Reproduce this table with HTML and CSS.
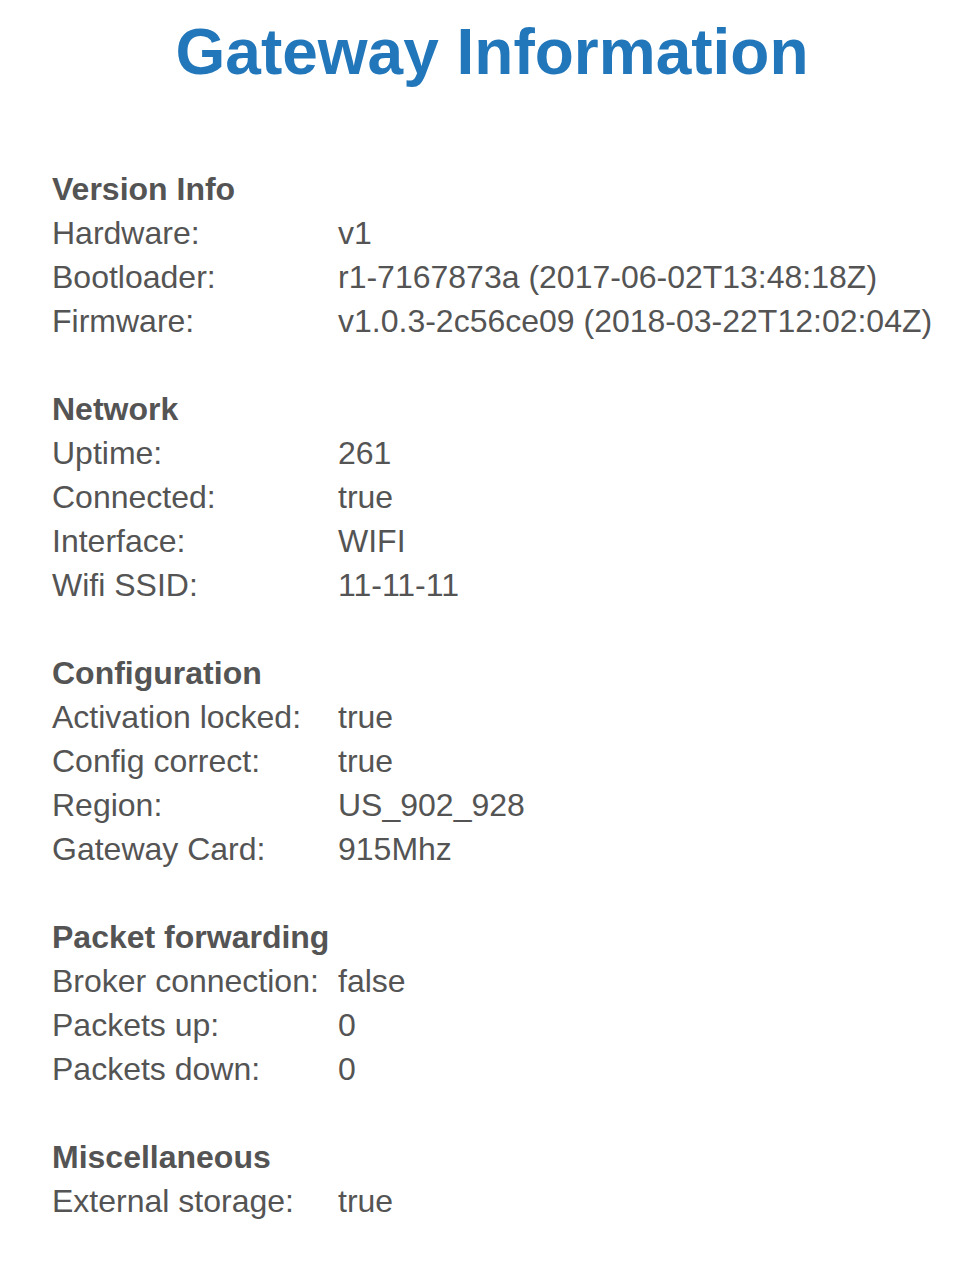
FILE: index.html
```html
<!DOCTYPE html>
<html>
<head>
<meta charset="utf-8">
<link rel="stylesheet" href="styles.css">
<title>Gateway Information</title>
</head>
<body>
<div class="page">
  <h1 class="title">Gateway Information</h1>

  <section class="group">
    <h2 class="group-title">Version Info</h2>
    <div class="label">Hardware:</div><div class="value">v1</div>
    <div class="label">Bootloader:</div><div class="value">r1-7167873a (2017-06-02T13:48:18Z)</div>
    <div class="label">Firmware:</div><div class="value">v1.0.3-2c56ce09 (2018-03-22T12:02:04Z)</div>
  </section>

  <section class="group">
    <h2 class="group-title">Network</h2>
    <div class="label">Uptime:</div><div class="value">261</div>
    <div class="label">Connected:</div><div class="value">true</div>
    <div class="label">Interface:</div><div class="value">WIFI</div>
    <div class="label">Wifi SSID:</div><div class="value">11-11-11</div>
  </section>

  <section class="group">
    <h2 class="group-title">Configuration</h2>
    <div class="label">Activation locked:</div><div class="value">true</div>
    <div class="label">Config correct:</div><div class="value">true</div>
    <div class="label">Region:</div><div class="value">US_902_928</div>
    <div class="label">Gateway Card:</div><div class="value">915Mhz</div>
  </section>

  <section class="group">
    <h2 class="group-title">Packet forwarding</h2>
    <div class="label">Broker connection:</div><div class="value">false</div>
    <div class="label">Packets up:</div><div class="value">0</div>
    <div class="label">Packets down:</div><div class="value">0</div>
  </section>

  <section class="group">
    <h2 class="group-title">Miscellaneous</h2>
    <div class="label">External storage:</div><div class="value">true</div>
  </section>
</div>
</body>
</html>
```

FILE: styles.css
```css
html, body {
  margin: 0;
  padding: 0;
  background: #ffffff;
}

body {
  font-family: "Liberation Sans", Arial, Helvetica, sans-serif;
  color: #545454;
}

.page {
  width: 880px;
  padding: 15px 0 0 52px;
}

.title {
  margin: 0 0 78px 0;
  font-size: 64px;
  line-height: 74px;
  font-weight: bold;
  color: #2277bb;
  text-align: center;
}

.group {
  display: grid;
  grid-template-columns: 286px auto;
  grid-auto-rows: 44px;
  font-size: 32px;
  line-height: 44px;
  margin-bottom: 44px;
}

.group-title {
  grid-column: 1 / -1;
  margin: 0;
  font-size: 32px;
  line-height: 44px;
  font-weight: bold;
}

.label, .value {
  white-space: nowrap;
}
```
